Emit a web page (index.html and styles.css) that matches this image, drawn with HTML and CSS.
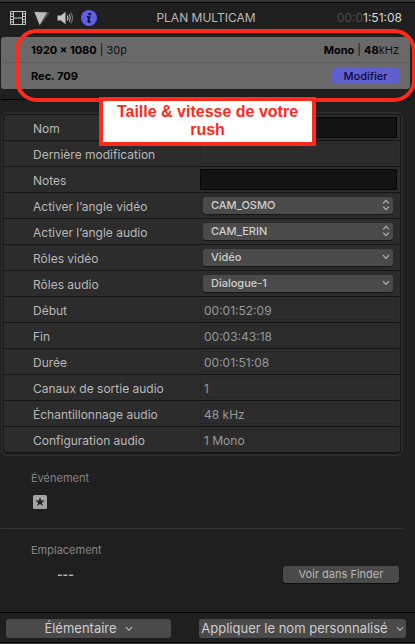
FILE: index.html
```html
<!DOCTYPE html>
<html lang="fr">
<head>
<meta charset="utf-8">
<meta name="viewport" content="width=device-width, initial-scale=1">
<title>Plan multicam</title>
<link rel="stylesheet" href="styles.css">
</head>
<body>
<svg class="defs" aria-hidden="true">
  <symbol id="updown" viewBox="0 0 8 12"><path d="M1.200 4.300 4 1.400 6.800 4.300M1.200 7.700 4 10.600 6.800 7.700"/></symbol>
  <symbol id="down" viewBox="0 0 8 12"><path d="M1 4.200 4 7.400 7 4.200"/></symbol>
</svg>
<div class="inspector">
  <header class="topbar">
    <nav class="tabs">
      <button class="tab" aria-label="Vidéo">
        <svg width="16" height="14" viewBox="0 0 16 14"><path fill="none" stroke="#c4c4c4" d="M.5.5h15v13H.5zM3.500.5v13M12.500.5v13M3.500 7h9M.5 3h3M.5 5.500h3M.5 8.500h3M.5 11h3M12.500 3h3M12.500 5.500h3M12.500 8.500h3M12.500 11h3"/></svg>
      </button>
      <button class="tab" aria-label="Couleur">
        <svg width="17" height="15" viewBox="0 0 17 15"><path fill="#4b4b4b" d="M1 .5 15.500 1 16 3 7 14.500z"/><path fill="#bcbcbc" d="M1.500 1 14 1.500 6.500 14z"/></svg>
      </button>
      <button class="tab" aria-label="Audio">
        <svg width="17" height="14" viewBox="0 0 17 14"><path fill="#c4c4c4" d="M.5 4.500h3.500L8.500.8v12.400L4 9.500H.5z"/><path fill="none" stroke="#c4c4c4" stroke-width="1.200" d="M10.300 4.600q1.500 2.400 0 4.800"/><path fill="none" stroke="#a4a4a4" stroke-width="1.200" d="M12 3q2.400 4 0 8"/><path fill="none" stroke="#707070" stroke-width="1.200" d="M13.800 1.500q3.400 5.500 0 11"/></svg>
      </button>
      <button class="tab" aria-label="Infos">
        <svg width="16" height="16" viewBox="0 0 16 16"><circle cx="8" cy="8" r="8" fill="#5f5fe8"/><circle cx="8.800" cy="4.200" r="1.400" fill="#17172c"/><path fill="none" stroke="#17172c" stroke-width="1.900" d="M6 7.100h2.400L7.300 11.300q-.2.900.7.700l1.500-.6"/></svg>
      </button>
    </nav>
    <h1 class="title">PLAN MULTICAM</h1>
    <div class="timecode"><span class="dim">00:0</span>1:51:08</div>
  </header>

  <section class="summary">
    <div class="summary-row"><span><b>1920 × 1080</b> | 30p</span><span><b>Mono</b> | <b>48</b>kHz</span></div>
    <div class="summary-row"><b>Rec. 709</b><button class="modify">Modifier</button></div>
    <div class="highlight"></div>
    <p class="callout">Taille &amp; vitesse de votre rush</p>
  </section>

  <form class="props">
    <div class="prop"><label for="nom">Nom</label><input class="field dark" id="nom"></div>
    <div class="prop"><label for="modif">Dernière modification</label><input class="field" id="modif" readonly></div>
    <div class="prop"><label for="notes">Notes</label><input class="field dark" id="notes"></div>
    <div class="prop"><label for="av">Activer l’angle vidéo</label><div class="pick"><select id="av"><option>CAM_OSMO</option></select><svg class="arrow"><use href="#updown"/></svg></div></div>
    <div class="prop"><label for="aa">Activer l’angle audio</label><div class="pick"><select id="aa"><option>CAM_ERIN</option></select><svg class="arrow"><use href="#updown"/></svg></div></div>
    <div class="prop"><label for="rv">Rôles vidéo</label><div class="pick"><select id="rv"><option>Vidéo</option></select><svg class="arrow"><use href="#down"/></svg></div></div>
    <div class="prop"><label for="ra">Rôles audio</label><div class="pick"><select id="ra"><option>Dialogue-1</option></select><svg class="arrow"><use href="#down"/></svg></div></div>
    <div class="prop"><label for="debut">Début</label><input class="field" id="debut" value="00:01:52:09" readonly></div>
    <div class="prop"><label for="fin">Fin</label><input class="field" id="fin" value="00:03:43:18" readonly></div>
    <div class="prop"><label for="duree">Durée</label><input class="field" id="duree" value="00:01:51:08" readonly></div>
    <div class="prop"><label for="canaux">Canaux de sortie audio</label><input class="field" id="canaux" value="1" readonly></div>
    <div class="prop"><label for="ech">Échantillonnage audio</label><input class="field" id="ech" value="48 kHz" readonly></div>
    <div class="prop"><label for="conf">Configuration audio</label><input class="field" id="conf" value="1 Mono" readonly></div>
  </form>

  <section class="event">
    <h2>Événement</h2>
    <svg class="star" width="14" height="14" viewBox="0 0 14 14"><rect width="14" height="14" rx="1.500" fill="#a3a3a3"/><path fill="#222" d="M7 2.300 8.200 5.600h3.500L8.900 7.700l1 3.400L7 9.100l-2.900 2 1-3.400-2.800-2.100h3.500z"/></svg>
  </section>
  <section class="location">
    <h2>Emplacement</h2>
    <div class="location-row"><b>---</b><button class="finder">Voir dans Finder</button></div>
  </section>

  <footer class="bottombar">
    <button class="menu basic">Élémentaire<svg class="arrow"><use href="#down"/></svg></button>
    <button class="menu apply">Appliquer le nom personnalisé<svg class="arrow"><use href="#down"/></svg></button>
  </footer>
</div>
</body>
</html>
```

FILE: styles.css
```css
* { box-sizing: border-box; }
body {
  margin: 0;
  background: #1f1f1f;
  color: #b8b8b8;
  font: 12px/16px Inter, "Liberation Sans", sans-serif;
}
button, input, select { font: inherit; color: inherit; border: 0; margin: 0; padding: 0; }
h1, h2, p { margin: 0; font-weight: 400; }
.defs { position: absolute; width: 0; height: 0; }

.inspector {
  display: flex;
  flex-direction: column;
  min-height: 100vh;
  border-top: 2px solid #333;
  border-bottom: 1px solid #333;
}

.topbar {
  display: grid;
  grid-template-columns: 1fr auto 1fr;
  align-items: center;
  height: 35px;
  padding: 0 13px 4px 10px;
  border-top: 1px solid #000;
}
.tabs { display: flex; align-items: center; gap: 7px; }
.tab { display: flex; background: none; }
.title { font-size: 12px; line-height: 16px; }
.timecode { justify-self: end; color: #d6d6d6; }
.dim { color: #4b4b4b; }

.summary {
  position: relative;
  z-index: 1;
  margin: 0 5px 0 1px;
  padding: 0 4px;
  border-radius: 3px;
  background: #696969;
  color: #111;
  font-size: 11px;
}
.summary-row {
  display: flex;
  align-items: center;
  justify-content: space-between;
  height: 26px;
  padding: 0 7px 0 26px;
}
.summary-row:first-child { border-bottom: 1px solid #5a5a5a; }
.summary b { color: #000; font-weight: 700; }
.modify {
  width: 67px;
  height: 16px;
  border-radius: 3px;
  background: #5f5fcf;
  color: #0c0c40;
  font-weight: 500;
}
.highlight {
  position: absolute;
  inset: -8px -6px -13px 14px;
  border: 4px solid #ff2a1c;
  border-radius: 22px;
}
.callout {
  position: absolute;
  z-index: 1;
  top: 60px;
  left: 98px;
  width: 217px;
  padding: 2px 8px 3px;
  border: 4px solid #ff2a1c;
  background: #fff;
  color: #ff2a1c;
  font: 700 16px/18px "Liberation Sans", sans-serif;
  text-align: center;
}

.props {
  position: relative;
  margin: 23px 12px 0 1px;
  padding: 1px;
  border: 2px solid #2b2b2b;
  border-radius: 6px;
  background: #151515;
}
.props::before {
  content: "";
  position: absolute;
  top: -15px;
  left: -2px;
  right: -10px;
  border-top: 1px solid #000;
}
.prop {
  display: grid;
  grid-template-columns: 167px 1fr;
  align-items: center;
  height: 26px;
  padding: 0 3px 0 29px;
  border-bottom: 1px solid #151515;
  background: #2c2c2c;
}
.prop label { padding-top: 2px; }
.prop:first-child { border-radius: 3px 3px 0 0; }
.prop:last-child { border-radius: 0 0 3px 3px; }
.field {
  width: 100%;
  height: 21px;
  padding: 2px 3px 0;
  border: 1px solid #262626;
  background: #2c2c2c;
  color: #989898;
}
.field.dark { background: #131313; border-color: #060606; }
.pick { position: relative; height: 17px; margin: 0 4px 0 3px; }
.pick select {
  display: block;
  width: 100%;
  height: 100%;
  padding: 0 20px 0 8px;
  border-radius: 3px;
  background: #4a4a4a;
  color: #cecece;
  font-size: 11px;
  font-weight: 500;
  line-height: 17px;
  appearance: none;
  box-shadow: 0 1px 1px #161616;
}
.arrow {
  width: 8px;
  height: 12px;
  fill: none;
  stroke: #b4b4b4;
  stroke-width: 1.2;
}
.pick .arrow { position: absolute; right: 3px; top: 2px; pointer-events: none; }

.event { margin: 0 12px 0 1px; padding: 14px 30px 19px; border-bottom: 1px solid #333; }
h2 { color: #848484; font-size: 11px; line-height: 16px; }
.star { display: block; margin: 9px 0 0 2px; }
.location { padding: 13px 16px 28px 31px; }
.location-row { display: flex; justify-content: space-between; align-items: center; margin-top: 8px; padding-left: 26px; }
.finder {
  width: 116px;
  height: 17px;
  border-radius: 3px;
  background: #4a4a4a;
  box-shadow: 0 1px 1px #0c0c0c;
  font-size: 11px;
  line-height: 17px;
}

.bottombar {
  display: flex;
  justify-content: space-between;
  margin-top: auto;
  padding: 6px 9px 4px 6px;
  border: solid #000;
  border-width: 1px 0;
}
.menu {
  display: flex;
  align-items: center;
  justify-content: center;
  gap: 8px;
  height: 19px;
  border-radius: 3px;
  background: #4a4a4a;
  color: #cecece;
  font-size: 13px;
  line-height: 19px;
  white-space: nowrap;
}
.basic { width: 165px; }
.apply { width: 207px; }
```
